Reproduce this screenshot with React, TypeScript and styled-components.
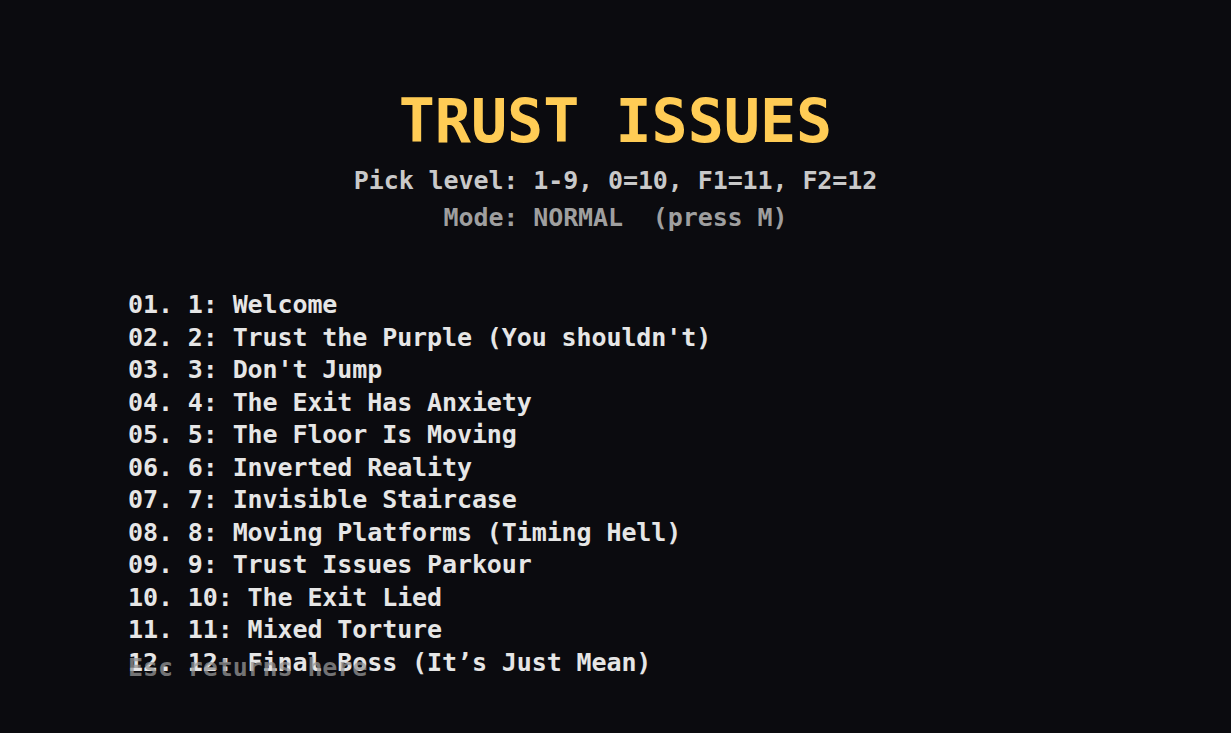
import styled, { createGlobalStyle } from 'styled-components';

const GlobalStyle = createGlobalStyle`
  html, body {
    margin: 0;
    padding: 0;
    background: #0b0b0f;
  }
`;

const levels = [
  '1: Welcome',
  "2: Trust the Purple (You shouldn't)",
  "3: Don't Jump",
  '4: The Exit Has Anxiety',
  '5: The Floor Is Moving',
  '6: Inverted Reality',
  '7: Invisible Staircase',
  '8: Moving Platforms (Timing Hell)',
  '9: Trust Issues Parkour',
  '10: The Exit Lied',
  '11: Mixed Torture',
  '12: Final Boss (It\u2019s Just Mean)',
];

export default function App() {
  return (
    <>
      <GlobalStyle />
      <Screen>
        <Header>
          <Title>TRUST ISSUES</Title>
          <Hint>Pick level: 1-9, 0=10, F1=11, F2=12</Hint>
          <Mode>Mode: NORMAL&nbsp;&nbsp;(press M)</Mode>
        </Header>
        <LevelList>
          {levels.map((name, i) => (
            <Level key={name}>
              {String(i + 1).padStart(2, '0')}. {name}
            </Level>
          ))}
        </LevelList>
        <Footer>Esc returns here</Footer>
      </Screen>
    </>
  );
}

const Screen = styled.div`
  position: relative;
  width: 1231px;
  height: 733px;
  overflow: hidden;
  background: #0b0b0f;
  font-family: 'DejaVu Sans Mono', 'Liberation Mono', monospace;
  font-weight: bold;
  padding-top: 85px;
  box-sizing: border-box;
`;

const Header = styled.div`
  display: flex;
  flex-direction: column;
  align-items: center;
`;

const Title = styled.h1`
  margin: 0 0 5px;
  font-size: 60px;
  line-height: 72px;
  color: #ffcc55;
  white-space: pre;
`;

const Hint = styled.div`
  font-size: 25px;
  line-height: 37px;
  letter-spacing: -0.1px;
  color: #c9c9c9;
  white-space: pre;
`;

const Mode = styled(Hint)`
  color: #9f9f9f;
`;

const LevelList = styled.div`
  display: flex;
  flex-direction: column;
  margin-top: 53px;
  padding-left: 128px;
`;

const Level = styled.div`
  font-size: 25px;
  line-height: 32.5px;
  letter-spacing: -0.1px;
  color: #e6e6e6;
  white-space: pre;
`;

const Footer = styled.div`
  position: absolute;
  left: 128px;
  top: 652px;
  font-size: 25px;
  line-height: 32.5px;
  letter-spacing: -0.1px;
  color: rgba(150, 150, 150, 0.75);
  white-space: pre;
`;
